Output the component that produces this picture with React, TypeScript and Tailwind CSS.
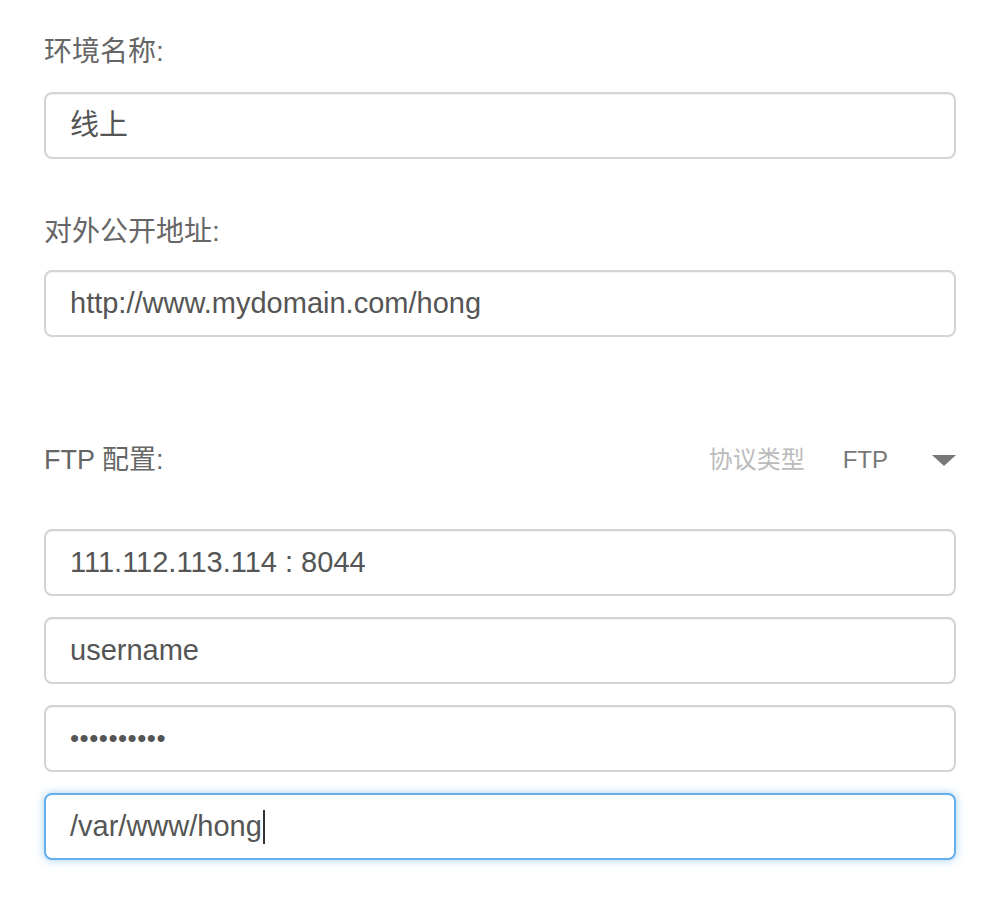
const font = { fontFamily: '"Liberation Sans", "Noto Sans CJK SC", sans-serif' };

function Field({ value, focused, caret, small }: { value: string; focused?: boolean; caret?: boolean; small?: boolean }) {
  return (
    <div
      className={
        "h-[67px] flex items-center px-[24px] rounded-[8px] border-2 bg-white text-[#555] " +
        (small ? "text-[26px] tracking-[0.5px] " : "text-[29px] ") +
        (focused
          ? "border-[#66afe9] shadow-[0_0_8px_rgba(102,175,233,0.6)]"
          : "border-[#d4d4d4] shadow-[inset_0_1px_1px_rgba(0,0,0,0.06)]")
      }
    >
      <span>{value}</span>
      {caret && <span className="inline-block w-[2px] h-[34px] bg-[#333] ml-[1px]" />}
    </div>
  );
}

export default function App() {
  return (
    <div className="min-h-screen bg-white pl-[44px] pr-[48px] pt-[34px]" style={font}>
      <div className="h-[36px] leading-[36px] text-[28px] text-[#666] mb-[22px]">环境名称:</div>
      <Field value="线上" />

      <div className="h-[36px] leading-[36px] text-[28px] text-[#666] mt-[55px] mb-[20px]">对外公开地址:</div>
      <Field value="http://www.mydomain.com/hong" />

      <div className="h-[36px] mt-[105px] mb-[51px] flex items-center justify-between">
        <span className="text-[27px] text-[#666]">FTP 配置:</span>
        <div className="flex items-center">
          <span className="text-[24px] text-[#bbb]">协议类型</span>
          <span className="text-[24px] text-[#777] ml-[38px]">FTP</span>
          <svg width="24" height="11" viewBox="0 0 24 11" className="ml-[44px]">
            <path d="M0 0 L24 0 L12 11 Z" fill="#777" />
          </svg>
        </div>
      </div>

      <div className="flex flex-col gap-[21px]">
        <Field value="111.112.113.114 : 8044" />
        <Field value="username" />
        <Field value="••••••••••" small />
        <Field value="/var/www/hong" focused caret />
      </div>
    </div>
  );
}
